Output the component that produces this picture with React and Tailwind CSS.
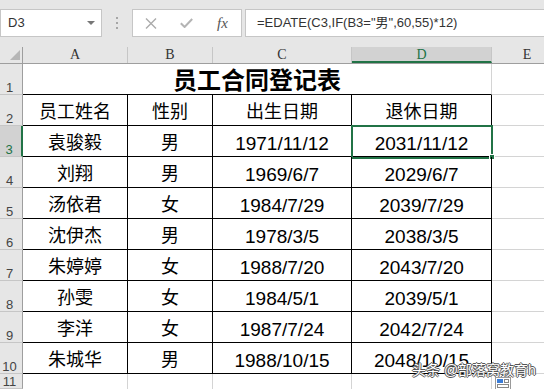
import React from "react";

const ROWS = [
  ["袁骏毅", "男", "1971/11/12", "2031/11/12"],
  ["刘翔", "男", "1969/6/7", "2029/6/7"],
  ["汤依君", "女", "1984/7/29", "2039/7/29"],
  ["沈伊杰", "男", "1978/3/5", "2038/3/5"],
  ["朱婷婷", "女", "1988/7/20", "2043/7/20"],
  ["孙雯", "女", "1984/5/1", "2039/5/1"],
  ["李洋", "女", "1987/7/24", "2042/7/24"],
  ["朱城华", "男", "1988/10/15", "2048/10/15"],
];

const COL_W = ["w-[105px]", "w-[85px]", "w-[139px]", "w-[140px]"];

function RowHead({ n, active, h = "h-[31px]" }) {
  return (
    <div
      className={`flex ${h} w-[23px] shrink-0 items-end justify-center border-b border-b-[#c6c6c6] pr-[3px] text-[13px] leading-none ${
        active
          ? "border-r-2 border-r-[#217346] bg-[#d2d2d2] text-[#217346]"
          : "border-r border-r-[#9e9e9e] bg-[#e6e6e6] text-[#444]"
      }`}
    >
      {n}
    </div>
  );
}

function Cell({ w, children, selected, num }) {
  return (
    <div
      className={`relative flex h-full ${w} shrink-0 items-center justify-center border-r border-b border-black pt-[4px] ${
        num ? "text-[19px]" : "text-[18px]"
      } leading-none text-black`}
    >
      {children}
      {selected && (
        <>
          <div className="absolute -left-[1px] -top-[1px] h-[34px] w-[142px] border-2 border-[#217346]" />
          <div className="absolute -bottom-[4px] -right-[4px] h-[6px] w-[6px] border border-white bg-[#217346]" />
        </>
      )}
    </div>
  );
}

export default function App() {
  return (
    <div className="relative h-[389px] w-[544px] overflow-hidden bg-white font-['Liberation_Sans','Noto_Sans_CJK_SC',sans-serif]">
      {/* formula bar */}
      <div className="flex h-[47px] items-start bg-[#e6e6e6] pt-[9px]">
        <div className="flex h-[28px] w-[102px] shrink-0 items-center justify-between border border-[#c6c6c6] bg-white pl-[7px] pr-[6px] text-[13px] text-[#333]">
          <span>D3</span>
          <svg width="8" height="4" viewBox="0 0 8 4">
            <path d="M0 0h8L4 4z" fill="#777" />
          </svg>
        </div>
        <div className="flex h-[28px] w-[30px] shrink-0 flex-col items-center justify-center gap-[3px]">
          <span className="h-[2px] w-[2px] bg-[#a6a6a6]" />
          <span className="h-[2px] w-[2px] bg-[#a6a6a6]" />
          <span className="h-[2px] w-[2px] bg-[#a6a6a6]" />
        </div>
        <div className="flex h-[28px] w-[110px] shrink-0 items-center border border-[#c6c6c6] bg-white pl-[12px]">
          <svg width="12" height="11" viewBox="0 0 12 11">
            <path d="M1 0.5l10 10M11 0.5l-10 10" stroke="#ababab" strokeWidth="1.4" />
          </svg>
          <svg className="ml-[23px]" width="13" height="10" viewBox="0 0 13 10">
            <path d="M0.8 5.2l3.8 3.8L12.2 1" fill="none" stroke="#b4b4b4" strokeWidth="2" />
          </svg>
          <span className="ml-[24px] font-['Liberation_Serif',serif] text-[15px] italic leading-none text-[#555]">
            fx
          </span>
        </div>
        <div className="ml-[3px] flex h-[28px] flex-1 items-center border border-r-0 border-[#c6c6c6] bg-white pl-[11px] text-[13px] text-[#333]">
          =EDATE(C3,IF(B3="男",60,55)*12)
        </div>
      </div>

      {/* column headers */}
      <div className="flex h-[17px] border-b border-[#9e9e9e] bg-[#e6e6e6] font-['Liberation_Serif',serif] text-[14px] leading-none text-[#333]">
        <div className="relative w-[23px] shrink-0 border-r border-[#9e9e9e]">
          <svg className="absolute bottom-[3px] right-[2px]" width="10" height="10" viewBox="0 0 10 10">
            <path d="M10 0V10H0z" fill="#b6b6b6" />
          </svg>
        </div>
        {["A", "B", "C"].map((c, i) => (
          <div
            key={c}
            className={`flex ${COL_W[i]} shrink-0 items-center justify-center border-r border-[#c6c6c6]`}
          >
            {c}
          </div>
        ))}
        <div className="flex w-[140px] shrink-0 items-center justify-center border-b-2 border-r border-b-[#217346] border-r-[#c6c6c6] bg-[#d2d2d2] pt-[2px] text-[#217346]">
          D
        </div>
        <div className="flex flex-1 items-center justify-center pl-[18px]">E</div>
      </div>

      {/* row 1: title */}
      <div className="flex h-[31px]">
        <RowHead n="1" />
        <div className="flex w-[469px] shrink-0 items-center justify-center border-r border-b border-r-[#d4d4d4] border-b-black pt-[3px] text-[24px] font-bold leading-none text-black">
          员工合同登记表
        </div>
        <div className="flex-1 border-b border-[#d4d4d4]" />
      </div>

      {/* row 2: headers */}
      <div className="flex h-[31px]">
        <RowHead n="2" />
        {["员工姓名", "性别", "出生日期", "退休日期"].map((t, i) => (
          <Cell key={t} w={COL_W[i]}>
            {t}
          </Cell>
        ))}
        <div className="flex-1 border-b border-[#d4d4d4]" />
      </div>

      {ROWS.map((r, ri) => (
        <div key={ri} className="flex h-[31px]">
          <RowHead n={ri + 3} active={ri === 0} />
          {r.map((t, i) => (
            <Cell key={i} w={COL_W[i]} num={i > 1} selected={ri === 0 && i === 3}>
              {t}
            </Cell>
          ))}
          <div className="flex-1 border-b border-[#d4d4d4]" />
        </div>
      ))}

      {/* row 11 partial */}
      <div className="flex h-[15px]">
        <RowHead n="11" h="h-[15px]" />
        {COL_W.map((w, i) => (
          <div key={i} className={`${w} shrink-0 border-r border-[#d4d4d4]`} />
        ))}
      </div>

      {/* watermark */}
      <div className="absolute left-[412px] top-[363px] text-[14px] leading-none text-white [text-shadow:1px_0_0_#555,-1px_0_0_#555,0_1px_0_#555,0_-1px_0_#555]">
        头条 @部落窝教育h
      </div>
      <svg className="absolute left-[495px] top-[377px]" width="16" height="13" viewBox="0 0 16 13">
        <rect x="0.5" y="0.5" width="15" height="12" fill="#fff" stroke="#9a9a9a" />
        <rect x="2" y="2" width="6" height="4" fill="#3b7dd8" />
        <rect x="9.5" y="2.5" width="4" height="3" fill="none" stroke="#888" />
        <rect x="2.5" y="7.5" width="11" height="3" fill="none" stroke="#888" />
      </svg>
    </div>
  );
}
